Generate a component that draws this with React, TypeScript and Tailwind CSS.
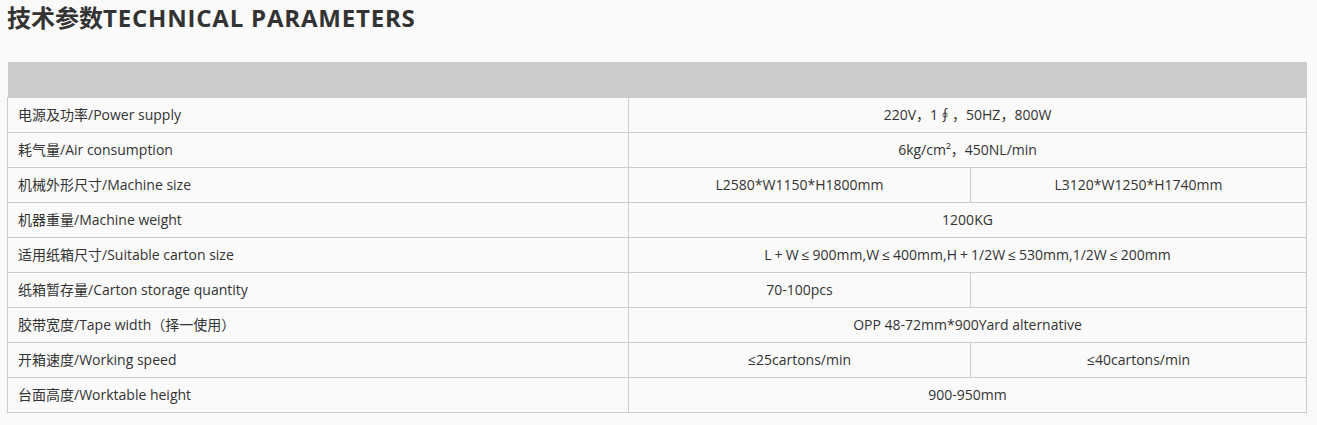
import type { ReactNode } from "react";

// + and ≤ sit in a wider fallback font in the original page
const Sym = ({ c }: { c: string }) => <span className="px-[3px]">{c}</span>;

const cartonSize = (
  <>
    L<Sym c="+" />W<Sym c="≤" />900mm,W<Sym c="≤" />400mm,H<Sym c="+" />1/2W<Sym c="≤" />530mm,1/2W<Sym c="≤" />200mm
  </>
);

const rows: { label: string; values: ReactNode[] }[] = [
  { label: "电源及功率/Power supply", values: ["220V，1∮，50HZ，800W"] },
  { label: "耗气量/Air consumption", values: ["6kg/cm²，450NL/min"] },
  { label: "机械外形尺寸/Machine size", values: ["L2580*W1150*H1800mm", "L3120*W1250*H1740mm"] },
  { label: "机器重量/Machine weight", values: ["1200KG"] },
  { label: "适用纸箱尺寸/Suitable carton size", values: [cartonSize] },
  { label: "纸箱暂存量/Carton storage quantity", values: ["70-100pcs", ""] },
  { label: "胶带宽度/Tape width（择一使用）", values: ["OPP 48-72mm*900Yard alternative"] },
  { label: "开箱速度/Working speed", values: ["≤25cartons/min", "≤40cartons/min"] },
  { label: "台面高度/Worktable height", values: ["900-950mm"] },
];

export default function App() {
  return (
    <div
      className="min-h-[425px] bg-[#fafafa] pl-[7px] pr-[10px] text-[#333]"
      style={{ fontFamily: '"Open Sans", "Noto Sans CJK SC", sans-serif' }}
    >
      <h2 className="text-[24px] font-bold leading-[36px] text-[#333]">
        技术参数<span className="tracking-[0.8px]">TECHNICAL PARAMETERS</span>
      </h2>
      <table className="mt-[26px] w-[1300px] table-fixed border-collapse text-[14px]">
        <colgroup>
          <col className="w-[621px]" />
          <col className="w-[342px]" />
          <col />
        </colgroup>
        <tbody>
          <tr className="h-[35px]">
            <td colSpan={3} className="bg-[#cccccc]" />
          </tr>
          {rows.map((row) => (
            <tr key={row.label} className="h-[35px]">
              <td className="border border-[#cccccc] pl-[10px] text-left">{row.label}</td>
              {row.values.length === 1 ? (
                <td colSpan={2} className="border border-[#cccccc] text-center">
                  {row.values[0]}
                </td>
              ) : (
                row.values.map((v, i) => (
                  <td key={i} className="border border-[#cccccc] text-center">
                    {v}
                  </td>
                ))
              )}
            </tr>
          ))}
        </tbody>
      </table>
    </div>
  );
}
